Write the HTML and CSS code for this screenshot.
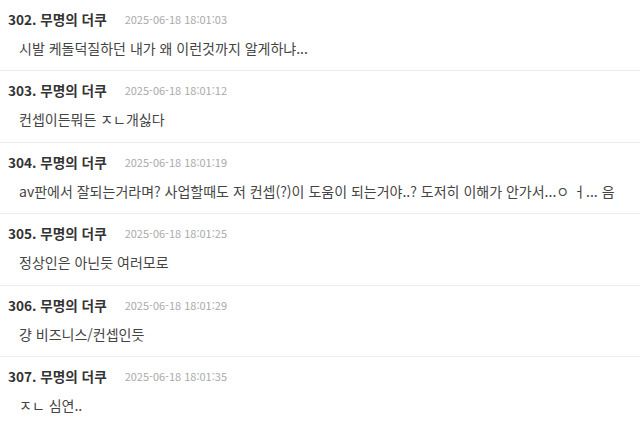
FILE: index.html
```html
<!DOCTYPE html>
<html lang="ko">
<head>
<meta charset="utf-8">
<link rel="stylesheet" href="styles.css">
</head>
<body>
<ul class="comments">
  <li class="comment">
    <div class="meta"><span class="author">302. 무명의 더쿠</span><span class="time">2025-06-18 18:01:03</span></div>
    <div class="body">시발 케돌덕질하던 내가 왜 이런것까지 알게하냐...</div>
  </li>
  <li class="comment">
    <div class="meta"><span class="author">303. 무명의 더쿠</span><span class="time">2025-06-18 18:01:12</span></div>
    <div class="body">컨셉이든뭐든 ㅈㄴ개싫다</div>
  </li>
  <li class="comment">
    <div class="meta"><span class="author">304. 무명의 더쿠</span><span class="time">2025-06-18 18:01:19</span></div>
    <div class="body">av판에서 잘되는거라며? 사업할때도 저 컨셉(?)이 도움이 되는거야..? 도저히 이해가 안가서...ㅇ ㅓ... 음</div>
  </li>
  <li class="comment">
    <div class="meta"><span class="author">305. 무명의 더쿠</span><span class="time">2025-06-18 18:01:25</span></div>
    <div class="body">정상인은 아닌듯 여러모로</div>
  </li>
  <li class="comment">
    <div class="meta"><span class="author">306. 무명의 더쿠</span><span class="time">2025-06-18 18:01:29</span></div>
    <div class="body">걍 비즈니스/컨셉인듯</div>
  </li>
  <li class="comment">
    <div class="meta"><span class="author">307. 무명의 더쿠</span><span class="time">2025-06-18 18:01:35</span></div>
    <div class="body">ㅈㄴ 심연..</div>
  </li>
</ul>
</body>
</html>
```
FILE: styles.css
```css
html, body {
  margin: 0;
  padding: 0;
  background: #fff;
}
body {
  font-family: "Noto Sans CJK KR", "Noto Sans", sans-serif;
  color: #333;
}
.comments {
  list-style: none;
  margin: 0;
  padding: 0;
}
.comment {
  padding: 10px 8px 12.4px;
  border-bottom: 1px solid #ececec;
}
.meta {
  display: flex;
  align-items: center;
  gap: 18px;
  height: 18px;
}
.author {
  font-size: 13.6px;
  font-weight: 700;
  color: #333;
}
.time {
  font-size: 11px;
  color: #aaa;
}
.body {
  margin-top: 10px;
  padding-left: 11px;
  font-size: 14px;
  line-height: 20px;
  color: #444;
  white-space: nowrap;
}
```
